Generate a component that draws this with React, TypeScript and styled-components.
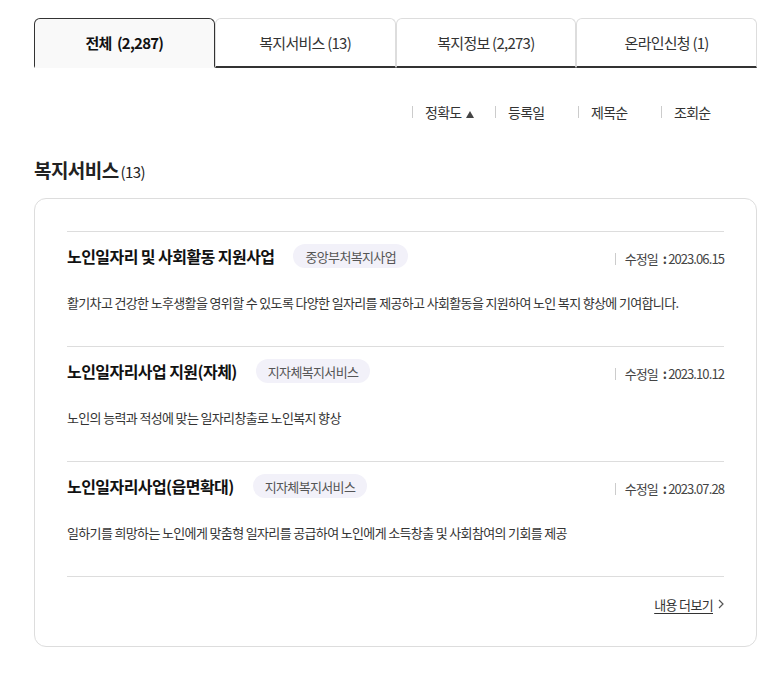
import * as React from 'react'
import styled, {createGlobalStyle, css} from 'styled-components'

const GlobalStyle = createGlobalStyle`
  body {
    margin: 0;
    background: #fff;
    font-family: "Noto Sans CJK KR", "Noto Sans", sans-serif;
    color: #222;
  }
`

const Page = styled.div`
  width: 723px;
  padding: 18px 13px 30px 34px;
`

const Tabs = styled.div`
  display: grid;
  grid-template-columns: repeat(4, 1fr);
`

const Tab = styled.div<{ $active?: boolean }>`
  height: 50px;
  box-sizing: border-box;
  display: flex;
  align-items: center;
  justify-content: center;
  border: 1px solid #ddd;
  border-bottom: 2px solid #333;
  border-radius: 6px 6px 0 0;
  background: #fff;
  font-size: 15px;
  letter-spacing: -0.05em;
  color: #333;
  ${p => p.$active && css`
    border-color: #333;
    border-bottom: 2px solid transparent;
    background: #f9f9f9;
    font-weight: 700;
    color: #111;
  `}
`

const SortBar = styled.div`
  display: flex;
  justify-content: flex-end;
  margin-top: 34px;
  padding-right: 13px;
`

const SortItem = styled.div`
  width: 83px;
  display: flex;
  align-items: center;
  gap: 12px;
  height: 20px;
  font-size: 14px;
  letter-spacing: -0.05em;
  color: #333;
  &::before {
    content: '';
    width: 1px;
    height: 12px;
    background: #ccc;
  }
  svg {
    margin-left: 4px;
  }
`

const Heading = styled.h2`
  margin: 34px 0 12px;
  font-size: 19px;
  line-height: 28px;
  font-weight: 700;
  letter-spacing: -0.03em;
  color: #222;
  span {
    font-size: 15px;
    font-weight: 400;
    letter-spacing: -0.04em;
    margin-left: 2px;
  }
`

const Card = styled.div`
  border: 1px solid #ddd;
  border-radius: 12px;
  padding: 32px 32px 32px;
`

const List = styled.ul`
  list-style: none;
  margin: 0;
  padding: 0;
  border-top: 1px solid #ddd;
`

const Item = styled.li`
  padding: 12px 0 33px;
  border-bottom: 1px solid #ddd;
`

const TitleRow = styled.div`
  display: flex;
  align-items: center;
  height: 24px;
`

const Title = styled.strong`
  font-size: 16px;
  font-weight: 700;
  letter-spacing: -0.035em;
  color: #111;
`

const Badge = styled.span`
  margin-left: 19px;
  height: 24px;
  display: inline-flex;
  align-items: center;
  padding: 0 12px;
  border-radius: 12px;
  background: #f2f1f9;
  font-size: 13px;
  letter-spacing: -0.05em;
  color: #555;
`

const DateInfo = styled.div`
  margin-left: auto;
  display: flex;
  align-items: center;
  gap: 9px;
  font-size: 13px;
  letter-spacing: -0.07em;
  color: #444;
  padding-top: 5px;
  &::before {
    content: '';
    width: 1px;
    height: 12px;
    background: #ccc;
  }
  .colon {
    margin: 0 2px 0 5px;
    font-weight: 700;
  }
`

const Desc = styled.p`
  margin: 25px 0 0;
  font-size: 13px;
  line-height: 20px;
  letter-spacing: -0.05em;
  color: #333;
`

const MoreRow = styled.div`
  display: flex;
  justify-content: flex-end;
  margin-top: 17px;
`

const MoreLink = styled.a`
  display: flex;
  align-items: center;
  gap: 5px;
  height: 20px;
  font-size: 13px;
  letter-spacing: -0.05em;
  color: #333;
  cursor: pointer;
  span {
    text-decoration: underline;
    text-underline-offset: 3px;
  }
`

const items = [
    {
        title: '노인일자리 및 사회활동 지원사업',
        badge: '중앙부처복지사업',
        date: '2023.06.15',
        desc: '활기차고 건강한 노후생활을 영위할 수 있도록 다양한 일자리를 제공하고 사회활동을 지원하여 노인 복지 향상에 기여합니다.',
    },
    {
        title: '노인일자리사업 지원(자체)',
        badge: '지자체복지서비스',
        date: '2023.10.12',
        desc: '노인의 능력과 적성에 맞는 일자리창출로 노인복지 향상',
    },
    {
        title: '노인일자리사업(읍면확대)',
        badge: '지자체복지서비스',
        date: '2023.07.28',
        desc: '일하기를 희망하는 노인에게 맞춤형 일자리를 공급하여 노인에게 소득창출 및 사회참여의 기회를 제공',
    },
]

export default function App() {
    return (
        <Page>
            <GlobalStyle/>
            <Tabs>
                <Tab $active>전체&nbsp;&nbsp;(2,287)</Tab>
                <Tab>복지서비스 (13)</Tab>
                <Tab>복지정보 (2,273)</Tab>
                <Tab>온라인신청 (1)</Tab>
            </Tabs>
            <SortBar>
                <SortItem>
                    <span>정확도
                        <svg width='8' height='7' viewBox='0 0 8 7'>
                            <polygon points='4,0 8,7 0,7' fill='#444'/>
                        </svg>
                    </span>
                </SortItem>
                <SortItem>등록일</SortItem>
                <SortItem>제목순</SortItem>
                <SortItem>조회순</SortItem>
            </SortBar>
            <Heading>복지서비스<span>(13)</span></Heading>
            <Card>
                <List>
                    {items.map(it => (
                        <Item key={it.title}>
                            <TitleRow>
                                <Title>{it.title}</Title>
                                <Badge>{it.badge}</Badge>
                                <DateInfo>
                                    <span>수정일<span className='colon'>:</span>{it.date}</span>
                                </DateInfo>
                            </TitleRow>
                            <Desc>{it.desc}</Desc>
                        </Item>
                    ))}
                </List>
                <MoreRow>
                    <MoreLink>
                        <span>내용 더보기</span>
                        <svg width='6' height='10' viewBox='0 0 6 10'>
                            <polyline points='1,1 5,5 1,9' fill='none' stroke='#555' strokeWidth='1.2'/>
                        </svg>
                    </MoreLink>
                </MoreRow>
            </Card>
        </Page>
    )
}
